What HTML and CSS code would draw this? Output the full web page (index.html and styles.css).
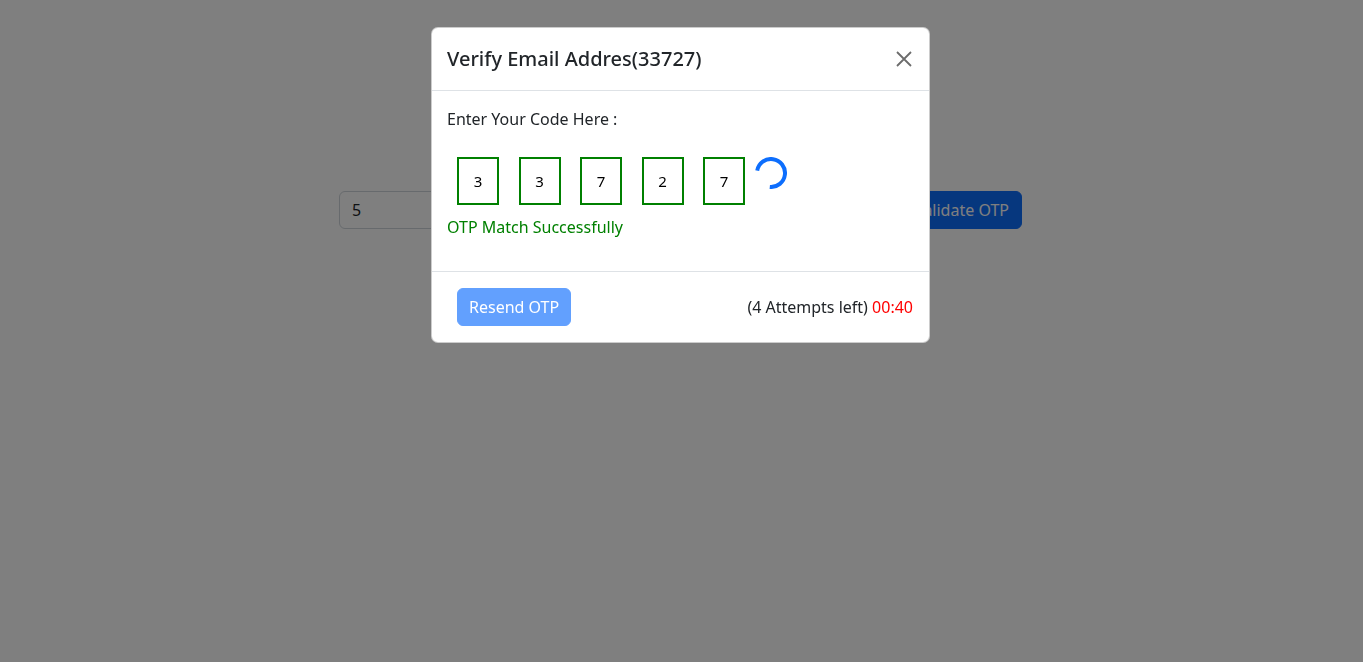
FILE: index.html
```html
<!DOCTYPE html>
<html>
<head>
<meta charset="utf-8">
<link rel="stylesheet" href="styles.css">
</head>
<body>
<div class="page">
  <div class="row">
    <input class="field" value="5">
    <button class="validate">Validate OTP</button>
  </div>
</div>
<div class="backdrop"></div>
<div class="modal">
  <div class="modal-content">
    <div class="modal-header">
      <h5 class="modal-title">Verify Email Addres(33727)</h5>
      <svg class="close" width="16" height="16" viewBox="0 0 16 16"><path d="M1 1L15 15M15 1L1 15" stroke="#6c6c6c" stroke-width="1.8" fill="none"/></svg>
    </div>
    <div class="modal-body">
      <p class="label">Enter Your Code Here :</p>
      <div class="otp">
        <div class="box">3</div>
        <div class="box">3</div>
        <div class="box">7</div>
        <div class="box">2</div>
        <div class="box">7</div>
        <svg class="spinner" width="32" height="32" viewBox="0 0 32 32"><path d="M2.21 13.57 A14 14 0 1 1 14.78 29.95" stroke="#0d6efd" stroke-width="4" fill="none"/></svg>
      </div>
      <p class="success">OTP Match Successfully</p>
    </div>
    <div class="modal-footer">
      <button class="resend">Resend OTP</button>
      <span class="attempts">(4 Attempts left) <span class="timer">00:40</span></span>
    </div>
  </div>
</div>
</body>
</html>
```
FILE: styles.css
```css
* { box-sizing: border-box; }
html, body { margin: 0; padding: 0; }
body {
  font-family: "Noto Sans", "Open Sans", sans-serif;
  font-size: 16px;
  color: #212529;
  background: #fff;
  width: 1363px;
  height: 662px;
  overflow: hidden;
}
.page {
  padding-top: 191px;
  padding-right: 2px;
  display: flex;
  justify-content: center;
}
.row {
  width: 683px;
  display: flex;
  gap: 12px;
}
.field {
  flex: 1;
  height: 38px;
  border: 1px solid #ced4da;
  border-radius: 6px;
  padding: 6px 12px;
  font: inherit;
  color: #212529;
}
.validate {
  height: 38px;
  background: #0d6efd;
  color: #fff;
  border: 1px solid #0d6efd;
  border-radius: 6px;
  padding: 6px 12px;
  font: inherit;
}
.backdrop {
  position: fixed;
  inset: 0;
  background: rgba(0,0,0,0.5);
}
.modal {
  position: fixed;
  inset: 0;
  display: flex;
  justify-content: center;
  align-items: flex-start;
  padding-top: 27px;
  padding-right: 2px;
}
.modal-content {
  width: 499px;
  background: #fff;
  border: 1px solid rgba(0,0,0,0.2);
  border-radius: 7px;
}
.modal-header {
  display: flex;
  align-items: center;
  justify-content: space-between;
  padding: 16px 16px 16px 15px;
  border-bottom: 1px solid #dee2e6;
}
.modal-title {
  margin: 0;
  font-size: 20px;
  font-weight: 500;
  line-height: 30px;
}
.close { margin-right: 1px; }
.modal-body {
  padding: 16px 16px 32px 15px;
}
.label {
  margin: 0 0 26px;
  line-height: 24px;
}
.otp {
  display: flex;
  align-items: flex-start;
}
.box {
  width: 42px;
  height: 48px;
  border: 2px solid #008000;
  display: flex;
  align-items: center;
  justify-content: center;
  font-size: 15px;
  color: #000;
  margin-right: 19.5px;
}
.box:first-child { margin-left: 10px; }
.box:nth-child(5) { margin-right: 10px; }
.success {
  margin: 10px 0 0;
  color: #008000;
  line-height: 24px;
}
.modal-footer {
  display: flex;
  align-items: center;
  justify-content: space-between;
  padding: 16px 16px 16px 25px;
  border-top: 1px solid #dee2e6;
}
.resend {
  height: 38px;
  padding: 6px 11px;
  background: #62a0fe;
  border: 1px solid #62a0fe;
  color: #fff;
  border-radius: 6px;
  font: inherit;
}
.timer { color: #ff0000; }
```
